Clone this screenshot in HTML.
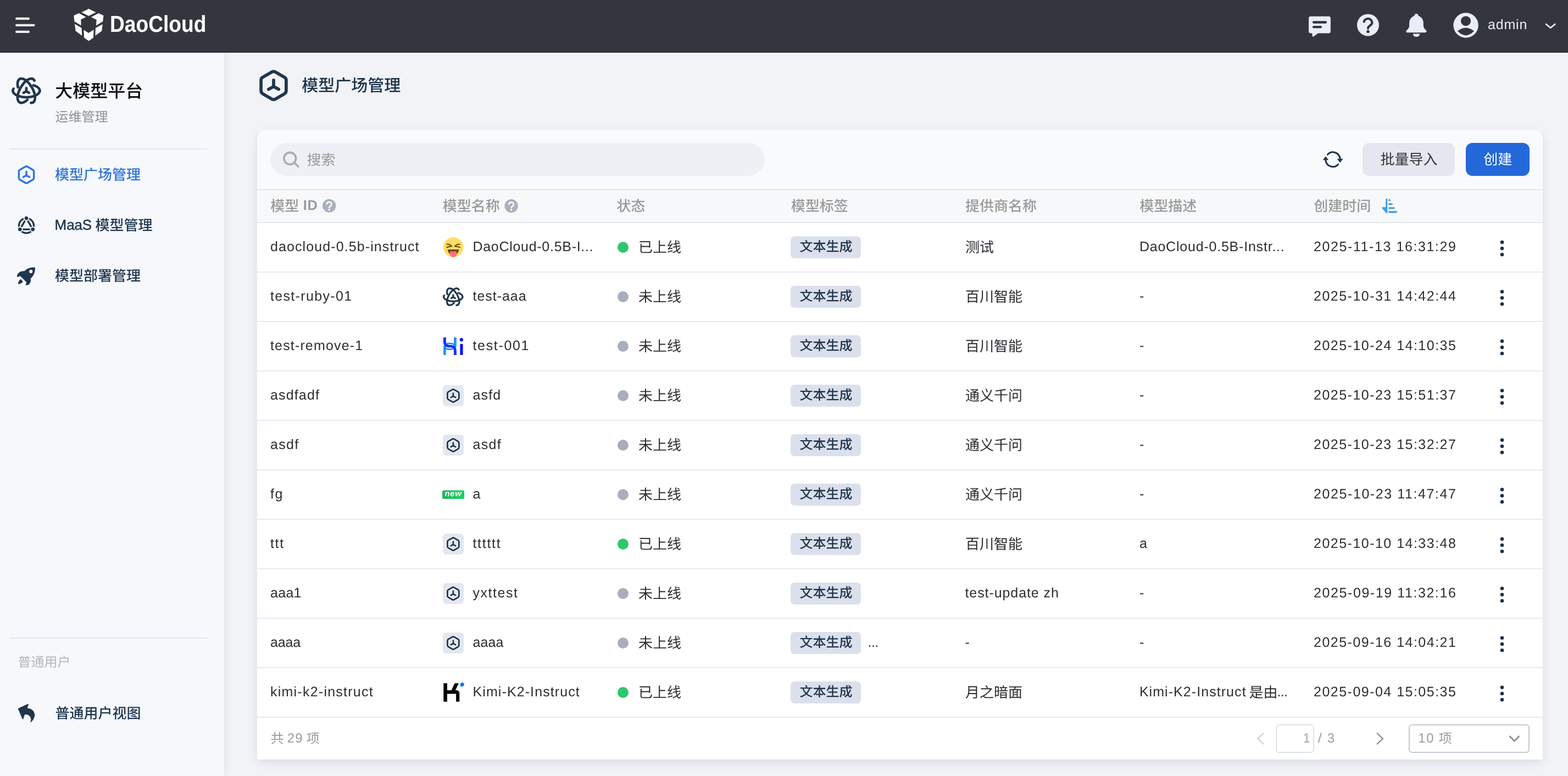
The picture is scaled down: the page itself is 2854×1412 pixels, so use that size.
<!DOCTYPE html>
<html lang="zh-CN">
<head>
<meta charset="utf-8">
<title>模型广场管理 - DaoCloud</title>
<style>
html,body{margin:0;padding:0}
body{width:2854px;height:1412px;overflow:hidden;position:relative;background:#f2f3f7;font-family:"Liberation Sans",sans-serif;color:#2c3036;-webkit-font-smoothing:antialiased;text-rendering:geometricPrecision}
*{box-sizing:border-box}
.abs,.t,.zh,.ic{position:absolute}
.t{white-space:nowrap;display:block}
.zh{display:block;overflow:visible;white-space:nowrap;font-family:"Liberation Sans","Noto Sans CJK SC",sans-serif;font-weight:400}
.zh.m{font-weight:500}
.ic{display:block;overflow:visible}
header{will-change:transform;position:absolute;left:0;top:0;width:2854px;height:96px;background:#33363d;z-index:5}
aside{will-change:transform;position:absolute;left:0;top:96px;width:408px;height:1316px;background:#f7f8fc;box-shadow:3px 0 14px rgba(25,30,45,.075);z-index:4}
main{will-change:transform;position:absolute;left:408px;top:96px;width:2446px;height:1316px}
.hr{position:absolute;left:18px;width:360px;height:2px;background:#e3e6ee}
.card{position:absolute;left:60px;top:140px;width:2340px;height:1146px;background:#fff;border-radius:16px 16px 0 0;box-shadow:0 6px 18px rgba(20,30,60,.10);overflow:hidden}
.toolbar{position:absolute;left:0;top:0;width:2340px;height:108px;background:#f9fafc}
.thead{position:absolute;left:0;top:108px;width:2340px;height:62px;background:#f7f8fa;border-top:2px solid #e4e7ef;border-bottom:2px solid #e4e7ef}
.row{position:absolute;left:0;width:2340px;height:90px;background:#fff;border-bottom:2px solid #e9ebf2}
.search{position:absolute;left:24px;top:24px;width:900px;height:60px;border-radius:30px;background:#eff0f5}
.btn{position:absolute;top:24px;height:60px;border-radius:12px}
.btn.sec{left:2012px;width:168px;background:#e4e7f0}
.btn.pri{left:2200px;width:116px;background:#2468d9}
.tag{position:absolute;width:128px;height:40px;border-radius:7px;background:#dbe0ec}
.dot{position:absolute;width:20px;height:20px;border-radius:50%}
.dot.on{background:#2dc76d}
.dot.off{background:#a8aebb}
.mico{position:absolute;width:38px;height:38px;border-radius:6px;background:#e4e7f0}
.pgin{position:absolute;border-radius:6px;background:#fff}

</style>
</head>
<body>
<svg width="0" height="0" style="position:absolute" aria-hidden="true"><defs>
<symbol id="i-hex" overflow="visible"><path d="M-3.25 -24.57A6.5 6.5 0 0 1 3.25 -24.57L19.66 -15.10A6.5 6.5 0 0 1 22.91 -9.47L22.91 9.47A6.5 6.5 0 0 1 19.66 15.10L3.25 24.57A6.5 6.5 0 0 1 -3.25 24.57L-19.66 15.10A6.5 6.5 0 0 1 -22.91 9.47L-22.91 -9.47A6.5 6.5 0 0 1 -19.66 -15.10Z" fill="none" stroke="currentColor" stroke-width="5.7" stroke-linejoin="round"/><path d="M0 1.9V-9.8M0 1.9L-9.2 6.9M0 1.9L9.3 6.9" fill="none" stroke="currentColor" stroke-width="5.7" stroke-linecap="round"/></symbol>
<symbol id="i-atom" overflow="visible"><g fill="none" stroke="currentColor" stroke-width="4.6" stroke-linecap="round"><path d="M12.98 -10.01A24.5 11.8 0 1 1 -23.30 -3.65"/><path d="M12.98 -10.01A24.5 11.8 0 1 1 -23.30 -3.65" transform="rotate(120)"/><path d="M12.98 -10.01A24.5 11.8 0 1 1 -23.30 -3.65" transform="rotate(240)"/><path d="M0 .9V-4.7M0 .9L-4.9 3.7M0 .9L4.9 3.7"/></g></symbol>
<symbol id="i-kebab" overflow="visible"><circle cx="0" cy="-11.3" r="3.3"/><circle cx="0" cy="0" r="3.3"/><circle cx="0" cy="11.3" r="3.3"/></symbol>
</defs></svg>
<header><svg class="ic" style="left:0;top:0" width="2854" height="96" viewBox="0 0 2854 96" aria-hidden="true">
<g stroke="#e9edf7" stroke-width="4.2" stroke-linecap="round" fill="none">
<path d="M30.1 33.9H52M30.1 45.8H61.6M30.1 57.9H52"/></g>
<g fill="#fff">
<polygon points="161.5,16 174.6,22.5 161.3,29.1 148.4,22.5"/>
<polygon points="134.3,28.2 143.6,24.1 156.4,31.1 147.3,35.6 147.6,46.3 135.4,39"/>
<polygon points="179.4,24.1 188.5,28.2 187.2,39 175,46.5 175.6,36 165.9,31.3"/>
<polygon points="136,43.6 148.6,50.9 149.2,65 137.6,56.3"/>
<polygon points="186.7,43.9 185.3,56.3 173.4,65 173.9,51.1"/>
<polygon points="152.3,54.4 161.3,60.1 170.6,54.1 169.9,68.8 161.5,74.6 153.2,68.8"/>
</g>
<g fill="#e9edf7">
<rect x="2382.1" y="29.8" width="39.8" height="30.8" rx="3.6"/>
<path d="M2388.3 59 L2388.6 65 Q2388.9 67.9 2391.4 66.2 L2400 59.6 Z"/>
<circle cx="2490" cy="45.5" r="20"/>
<path d="M2578 25.1 C2580.2 25.1 2581.6 26.7 2581.6 28.7 C2587 30.5 2590.8 35.5 2590.8 41.5 L2590.8 46 C2590.8 50 2592.5 52.5 2595.5 55 C2597.6 56.8 2596.8 59.2 2594.4 59.2 L2561.6 59.2 C2559.2 59.2 2558.4 56.8 2560.5 55 C2563.5 52.5 2565.2 50 2565.2 46 L2565.2 41.5 C2565.2 35.5 2569 30.5 2574.4 28.7 C2574.4 26.7 2575.8 25.1 2578 25.1 Z"/>
<path d="M2571.8 61.6 L2584.2 61.6 A6.2 5.4 0 0 1 2571.8 61.6 Z"/>
<circle cx="2668.1" cy="46" r="22.7"/>
</g>
<g stroke="#34353b" stroke-width="4.4" stroke-linecap="round" fill="none">
<path d="M2391.1 40.5H2412.9M2391.1 49.1H2403.9"/>
<path d="M2482.6 39.6 A7.5 7.2 0 0 1 2497.4 41.6 C2497.2 46.4 2490 46.6 2490 51.6" stroke-width="4.1"/>
</g>
<g fill="#34353b">
<circle cx="2490" cy="57.4" r="2.75"/>
<circle cx="2668" cy="38.2" r="9"/>
<path d="M2653 56.6 Q2668 44.4 2683 56.6 Q2668 72.2 2653 56.6 Z"/>
</g>
<path d="M2813.9 44 L2822.2 50.6 L2830.4 44" stroke="#e9edf7" stroke-width="2.7" stroke-linecap="round" stroke-linejoin="round" fill="none"/>
</svg><span class="t" style="left:200.00px;top:18.65px;font-size:42px;line-height:50px;font-weight:700;color:#fff;transform:scaleX(0.8845);transform-origin:0 0">DaoCloud</span><span class="t " style="left:2707.97px;top:30.34px;font-size:25px;line-height:30px;color:#e9edf7;letter-spacing:0.84px;">admin</span></header><aside><nav><svg class="ic" style="left:0;top:0" width="408" height="1316" viewBox="0 96 408 1316" aria-hidden="true"><use href="#i-atom" x="47.9" y="165.1" color="#1f364d"/><g transform="translate(48 318) scale(.597)" color="#2f76d9"><use href="#i-hex"/></g><g fill="none" stroke="#1f364d" stroke-width="3.3"><circle cx="48" cy="410.6" r="13.5"/><polygon points="48.00,397.10 59.69,417.35 36.31,417.35"/></g><circle cx="48.00" cy="397.10" r="5.3" fill="#f7f8fc"/><circle cx="48.00" cy="397.10" r="3.4" fill="#1f364d"/><circle cx="59.69" cy="417.35" r="5.3" fill="#f7f8fc"/><circle cx="59.69" cy="417.35" r="3.4" fill="#1f364d"/><circle cx="36.31" cy="417.35" r="5.3" fill="#f7f8fc"/><circle cx="36.31" cy="417.35" r="3.4" fill="#1f364d"/><g transform="translate(18 472) scale(0.04710)" fill="#1f364d"><path fill-rule="evenodd" d="M962 310C840 290 660 340 555 455C440 440 300 500 275 640C272 675 300 690 325 675C370 640 400 640 430 668L618 858C645 885 640 920 615 960C600 990 620 1005 655 1000C780 975 830 860 800 745C920 640 985 470 972 330C970 315 968 311 962 310ZM878 465A66 66 0 1 0 746 465A66 66 0 1 0 878 465Z"/><path d="M420 765L507 852C470 910 400 945 345 950C320 950 315 930 322 900C335 850 370 800 420 765Z"/></g><g transform="translate(18 1268) scale(0.04710)" fill="#1f364d"><path d="M318 465C312 455 318 445 330 438L690 275C712 265 725 280 718 300L672 435C860 445 960 570 957 710C955 830 880 930 780 1000C830 900 830 790 740 720C690 690 640 680 578 680L515 855C508 872 490 872 482 855Z"/></g></svg><span class="zh m" style="left:100.2px;top:53.7px;font-size:32px;line-height:32px;color:#0b0d10;">大模型平台</span><span class="zh" style="left:100.4px;top:106.1px;font-size:24px;line-height:24px;color:#8b919b;">运维管理</span><div class="hr" style="top:174px"></div><span class="zh m" style="left:100px;top:208.6px;font-size:26px;line-height:26px;color:#2f76d9;">模型广场管理</span><span class="t " style="left:99.58px;top:297.69px;font-size:26px;line-height:31px;color:#1f364d;letter-spacing:-0.11px;-webkit-text-stroke:0.5px #1f364d;">MaaS</span><span class="zh m" style="left:173.6px;top:301.4px;font-size:26px;line-height:26px;color:#1f364d;">模型管理</span><span class="zh m" style="left:100px;top:393.2px;font-size:26px;line-height:26px;color:#1f364d;">模型部署管理</span><div class="hr" style="top:1064px"></div><span class="zh" style="left:32.4px;top:1098.4px;font-size:24px;line-height:24px;color:#b3b8c1;">普通用户</span><span class="zh m" style="left:100.4px;top:1188.7px;font-size:26px;line-height:26px;color:#1f364d;">普通用户视图</span></nav></aside><main><svg class="ic" style="left:0;top:0" width="400" height="120" viewBox="408 96 400 120" aria-hidden="true"><use href="#i-hex" x="498" y="155.6" color="#1f364d"/></svg><h1 style="margin:0"><span class="zh m" style="left:141.2px;top:45.6px;font-size:30px;line-height:30px;color:#1c3349;">模型广场管理</span></h1><section class="card"><div class="toolbar"><div class="search"></div><svg class="ic" style="left:0;top:0" width="2340" height="108" viewBox="468 236 2340 108" aria-hidden="true"><g fill="none" stroke="#a7afbc" stroke-width="3.8" stroke-linecap="round"><circle cx="527.7" cy="288.3" r="10.8"/><path d="M535.6 296.1L542.7 303"/></g><g transform="translate(2396 260) scale(0.04710)"><g fill="none" stroke="#1f364d" stroke-width="66" stroke-linecap="round"><path d="M432 450A280 280 0 0 1 916 600"/><path d="M842 830A280 280 0 0 1 358 680"/></g><g fill="#1f364d" stroke="#1f364d" stroke-width="24" stroke-linejoin="round"><path d="M822 622H1008L915 748Z"/><path d="M452 653H266L358 537Z"/></g></g></svg><span class="zh" style="left:90.6px;top:41.7px;font-size:26px;line-height:26px;color:#9a9a9a;">搜索</span><div class="btn sec"></div><div class="btn pri"></div><span class="zh" style="left:2044.6px;top:40.9px;font-size:26px;line-height:26px;color:#333333;">批量导入</span><span class="zh" style="left:2232.2px;top:40.9px;font-size:26px;line-height:26px;color:#ffffff;">创建</span></div><div class="thead"></div><span class="zh m" style="left:24.2px;top:125.8px;font-size:26px;line-height:26px;color:#999999;">模型</span><span class="t " style="left:83.85px;top:122.56px;font-size:25.5px;line-height:31px;color:#999999;letter-spacing:0.69px;font-weight:700;">ID</span><span class="zh m" style="left:337.7px;top:125.8px;font-size:26px;line-height:26px;color:#999999;">模型名称</span><span class="zh m" style="left:654.4px;top:125.8px;font-size:26px;line-height:26px;color:#999999;">状态</span><span class="zh m" style="left:971.7px;top:125.8px;font-size:26px;line-height:26px;color:#999999;">模型标签</span><span class="zh m" style="left:1288.9px;top:125.8px;font-size:26px;line-height:26px;color:#999999;">提供商名称</span><span class="zh m" style="left:1606.2px;top:125.8px;font-size:26px;line-height:26px;color:#999999;">模型描述</span><span class="zh m" style="left:1923.2px;top:125.8px;font-size:26px;line-height:26px;color:#999999;">创建时间</span><svg class="ic" style="left:0;top:108px" width="2340" height="62" viewBox="468 344 2340 62" aria-hidden="true"><g><circle cx="599.2" cy="374.4" r="12.2" fill="#a9b1bd"/><path d="M594.9000000000001 371.0A4.4 4.2 0 0 1 603.6 371.79999999999995C603.5 375.0 599.2 374.79999999999995 599.2 377.79999999999995" fill="none" stroke="#fff" stroke-width="2.7" stroke-linecap="round"/><circle cx="599.2" cy="381.7" r="1.75" fill="#fff"/></g><g><circle cx="930.6" cy="374.8" r="12.2" fill="#a9b1bd"/><path d="M926.3000000000001 371.40000000000003A4.4 4.2 0 0 1 935.0 372.2C934.9 375.40000000000003 930.6 375.2 930.6 378.2" fill="none" stroke="#fff" stroke-width="2.7" stroke-linecap="round"/><circle cx="930.6" cy="382.1" r="1.75" fill="#fff"/></g><g transform="translate(2500 345) scale(0.04710)" fill="#409fe4"><path d="M470 385C470 355 490 340 535 340V925C520 925 505 918 495 905L325 715C310 695 320 680 345 680H470Z"/><rect x="575" y="373" width="86" height="70" rx="35"/><rect x="575" y="525" width="166" height="70" rx="35"/><rect x="575" y="677" width="251" height="70" rx="35"/><rect x="575" y="830" width="336" height="70" rx="35"/></g></svg><div class="row" style="top:170px"><span class="t " style="left:23.98px;top:28.24px;font-size:25px;line-height:30px;color:#2b2d31;letter-spacing:1.10px;">daocloud-0.5b-instruct</span><svg class="ic" style="left:0;top:0" width="2340" height="88" viewBox="468 406 2340 88" aria-hidden="true"><g transform="translate(796 420) scale(0.04710)"><circle cx="618" cy="635" r="384" fill="#ffdc64"/><g fill="none" stroke="#664500" stroke-width="42" stroke-linecap="round" stroke-linejoin="round"><path d="M375 522C450 515 520 545 560 602C490 600 420 615 365 640"/><path d="M861 522C786 515 716 545 676 602C746 600 816 615 871 640"/></g><path d="M400 722H832C820 850 740 930 616 930C492 930 412 850 400 722Z" fill="#664500"/><path d="M490 790H742V895A126 126 0 0 1 490 895Z" fill="#ff7083"/><rect x="603" y="790" width="26" height="120" fill="#e8596e"/></g><use href="#i-kebab" x="2734" y="452" fill="#1d3349"/></svg><span class="t " style="left:392.48px;top:28.24px;font-size:25px;line-height:30px;color:#2b2d31;letter-spacing:0.71px;">DaoCloud-0.5B-I...</span><span class="dot on" style="left:656px;top:33.60000000000002px"></span><span class="zh" style="left:693.9px;top:30.9px;font-size:26px;line-height:26px;color:#2b2d31;">已上线</span><span class="tag" style="left:971px;top:23.69999999999999px"></span><span class="zh m" style="left:987.4px;top:32.3px;font-size:24px;line-height:24px;color:#1d3349;">文本生成</span><span class="zh" style="left:1288.9px;top:30.9px;font-size:26px;line-height:26px;color:#2b2d31;">测试</span><span class="t " style="left:1605.88px;top:28.24px;font-size:25px;line-height:30px;color:#2b2d31;letter-spacing:0.79px;">DaoCloud-0.5B-Instr...</span><span class="t " style="left:1923.07px;top:28.24px;font-size:25px;line-height:30px;color:#2b2d31;letter-spacing:1.58px;">2025-11-13 16:31:29</span></div><div class="row" style="top:260px"><span class="t " style="left:23.98px;top:28.24px;font-size:25px;line-height:30px;color:#2b2d31;letter-spacing:1.34px;">test-ruby-01</span><svg class="ic" style="left:0;top:0" width="2340" height="88" viewBox="468 496 2340 88" aria-hidden="true"><g transform="translate(824.8 540) scale(.70)" color="#1f364d"><use href="#i-atom"/></g><use href="#i-kebab" x="2734" y="542" fill="#1d3349"/></svg><span class="t " style="left:392.48px;top:28.24px;font-size:25px;line-height:30px;color:#2b2d31;letter-spacing:0.98px;">test-aaa</span><span class="dot off" style="left:656px;top:33.60000000000002px"></span><span class="zh" style="left:693.9px;top:30.9px;font-size:26px;line-height:26px;color:#2b2d31;">未上线</span><span class="tag" style="left:971px;top:23.700000000000045px"></span><span class="zh m" style="left:987.4px;top:32.3px;font-size:24px;line-height:24px;color:#1d3349;">文本生成</span><span class="zh" style="left:1288.9px;top:30.9px;font-size:26px;line-height:26px;color:#2b2d31;">百川智能</span><span class="t " style="left:1605.88px;top:28.24px;font-size:25px;line-height:30px;color:#2b2d31;">-</span><span class="t " style="left:1923.07px;top:28.24px;font-size:25px;line-height:30px;color:#2b2d31;letter-spacing:1.48px;">2025-10-31 14:42:44</span></div><div class="row" style="top:350px"><span class="t " style="left:23.98px;top:28.24px;font-size:25px;line-height:30px;color:#2b2d31;letter-spacing:1.16px;">test-remove-1</span><svg class="ic" style="left:0;top:0" width="2340" height="88" viewBox="468 586 2340 88" aria-hidden="true"><g transform="translate(796 600) scale(0.04710)"><rect x="235" y="612" width="100" height="363" fill="#2491ff"/><rect x="637" y="295" width="103" height="372" fill="#2491ff"/><g fill="none" stroke="#1d82ff"><path d="M300 715C400 762 520 765 612 738" stroke-width="58"/><path d="M352 548C430 512 570 515 664 585" stroke-width="52"/></g><path d="M285 295V470C285 590 360 634 487 634C615 634 688 680 688 800V975" fill="none" stroke="#1034ff" stroke-width="104"/><circle cx="932" cy="385" r="66" fill="#0a14ff"/><rect x="878" y="550" width="112" height="425" fill="#0a14ff"/></g><use href="#i-kebab" x="2734" y="632" fill="#1d3349"/></svg><span class="t " style="left:392.48px;top:28.24px;font-size:25px;line-height:30px;color:#2b2d31;letter-spacing:1.66px;">test-001</span><span class="dot off" style="left:656px;top:33.60000000000002px"></span><span class="zh" style="left:693.9px;top:30.9px;font-size:26px;line-height:26px;color:#2b2d31;">未上线</span><span class="tag" style="left:971px;top:23.700000000000045px"></span><span class="zh m" style="left:987.4px;top:32.3px;font-size:24px;line-height:24px;color:#1d3349;">文本生成</span><span class="zh" style="left:1288.9px;top:30.9px;font-size:26px;line-height:26px;color:#2b2d31;">百川智能</span><span class="t " style="left:1605.88px;top:28.24px;font-size:25px;line-height:30px;color:#2b2d31;">-</span><span class="t " style="left:1923.07px;top:28.24px;font-size:25px;line-height:30px;color:#2b2d31;letter-spacing:1.48px;">2025-10-24 14:10:35</span></div><div class="row" style="top:440px"><span class="t " style="left:23.98px;top:28.24px;font-size:25px;line-height:30px;color:#2b2d31;letter-spacing:1.16px;">asdfadf</span><div class="mico" style="left:338px;top:25px"></div><svg class="ic" style="left:0;top:0" width="2340" height="88" viewBox="468 676 2340 88" aria-hidden="true"><g transform="translate(824.9 720) scale(.457)" color="#16304a"><use href="#i-hex"/></g><use href="#i-kebab" x="2734" y="722" fill="#1d3349"/></svg><span class="t " style="left:392.48px;top:28.24px;font-size:25px;line-height:30px;color:#2b2d31;letter-spacing:1.13px;">asfd</span><span class="dot off" style="left:656px;top:33.60000000000002px"></span><span class="zh" style="left:693.9px;top:30.9px;font-size:26px;line-height:26px;color:#2b2d31;">未上线</span><span class="tag" style="left:971px;top:23.700000000000045px"></span><span class="zh m" style="left:987.4px;top:32.3px;font-size:24px;line-height:24px;color:#1d3349;">文本生成</span><span class="zh" style="left:1288.9px;top:30.9px;font-size:26px;line-height:26px;color:#2b2d31;">通义千问</span><span class="t " style="left:1605.88px;top:28.24px;font-size:25px;line-height:30px;color:#2b2d31;">-</span><span class="t " style="left:1923.07px;top:28.24px;font-size:25px;line-height:30px;color:#2b2d31;letter-spacing:1.48px;">2025-10-23 15:51:37</span></div><div class="row" style="top:530px"><span class="t " style="left:23.98px;top:28.24px;font-size:25px;line-height:30px;color:#2b2d31;letter-spacing:1.30px;">asdf</span><div class="mico" style="left:338px;top:25px"></div><svg class="ic" style="left:0;top:0" width="2340" height="88" viewBox="468 766 2340 88" aria-hidden="true"><g transform="translate(824.9 810) scale(.457)" color="#16304a"><use href="#i-hex"/></g><use href="#i-kebab" x="2734" y="812" fill="#1d3349"/></svg><span class="t " style="left:392.48px;top:28.24px;font-size:25px;line-height:30px;color:#2b2d31;letter-spacing:1.30px;">asdf</span><span class="dot off" style="left:656px;top:33.60000000000002px"></span><span class="zh" style="left:693.9px;top:30.9px;font-size:26px;line-height:26px;color:#2b2d31;">未上线</span><span class="tag" style="left:971px;top:23.700000000000045px"></span><span class="zh m" style="left:987.4px;top:32.3px;font-size:24px;line-height:24px;color:#1d3349;">文本生成</span><span class="zh" style="left:1288.9px;top:30.9px;font-size:26px;line-height:26px;color:#2b2d31;">通义千问</span><span class="t " style="left:1605.88px;top:28.24px;font-size:25px;line-height:30px;color:#2b2d31;">-</span><span class="t " style="left:1923.07px;top:28.24px;font-size:25px;line-height:30px;color:#2b2d31;letter-spacing:1.48px;">2025-10-23 15:32:27</span></div><div class="row" style="top:620px"><span class="t " style="left:23.98px;top:28.24px;font-size:25px;line-height:30px;color:#2b2d31;letter-spacing:1.70px;">fg</span><svg class="ic" style="left:0;top:0" width="2340" height="88" viewBox="468 856 2340 88" aria-hidden="true"><defs><linearGradient id="gnew" x1="0" x2="1" y1="0" y2="0"><stop offset="0" stop-color="#22b35c"/><stop offset="1" stop-color="#0fd65c"/></linearGradient></defs><rect x="805" y="892.2" width="40" height="15.6" rx="2.6" fill="url(#gnew)"/><use href="#i-kebab" x="2734" y="902" fill="#1d3349"/></svg><span class="t " style="left:341.53px;top:34.10px;font-size:15px;line-height:18px;color:#fff;letter-spacing:0.59px;font-weight:700;font-style:italic;">new</span><span class="t " style="left:392.48px;top:28.24px;font-size:25px;line-height:30px;color:#2b2d31;">a</span><span class="dot off" style="left:656px;top:33.60000000000002px"></span><span class="zh" style="left:693.9px;top:30.9px;font-size:26px;line-height:26px;color:#2b2d31;">未上线</span><span class="tag" style="left:971px;top:23.700000000000045px"></span><span class="zh m" style="left:987.4px;top:32.3px;font-size:24px;line-height:24px;color:#1d3349;">文本生成</span><span class="zh" style="left:1288.9px;top:30.9px;font-size:26px;line-height:26px;color:#2b2d31;">通义千问</span><span class="t " style="left:1605.88px;top:28.24px;font-size:25px;line-height:30px;color:#2b2d31;">-</span><span class="t " style="left:1923.07px;top:28.24px;font-size:25px;line-height:30px;color:#2b2d31;letter-spacing:1.58px;">2025-10-23 11:47:47</span></div><div class="row" style="top:710px"><span class="t " style="left:23.98px;top:28.24px;font-size:25px;line-height:30px;color:#2b2d31;letter-spacing:1.70px;">ttt</span><div class="mico" style="left:338px;top:25px"></div><svg class="ic" style="left:0;top:0" width="2340" height="88" viewBox="468 946 2340 88" aria-hidden="true"><g transform="translate(824.9 990) scale(.457)" color="#16304a"><use href="#i-hex"/></g><use href="#i-kebab" x="2734" y="992" fill="#1d3349"/></svg><span class="t " style="left:392.48px;top:28.24px;font-size:25px;line-height:30px;color:#2b2d31;letter-spacing:1.70px;">tttttt</span><span class="dot on" style="left:656px;top:33.60000000000002px"></span><span class="zh" style="left:693.9px;top:30.9px;font-size:26px;line-height:26px;color:#2b2d31;">已上线</span><span class="tag" style="left:971px;top:23.700000000000045px"></span><span class="zh m" style="left:987.4px;top:32.3px;font-size:24px;line-height:24px;color:#1d3349;">文本生成</span><span class="zh" style="left:1288.9px;top:30.9px;font-size:26px;line-height:26px;color:#2b2d31;">百川智能</span><span class="t " style="left:1605.88px;top:28.24px;font-size:25px;line-height:30px;color:#2b2d31;">a</span><span class="t " style="left:1923.07px;top:28.24px;font-size:25px;line-height:30px;color:#2b2d31;letter-spacing:1.48px;">2025-10-10 14:33:48</span></div><div class="row" style="top:800px"><span class="t " style="left:23.98px;top:28.24px;font-size:25px;line-height:30px;color:#2b2d31;letter-spacing:0.31px;">aaa1</span><div class="mico" style="left:338px;top:25px"></div><svg class="ic" style="left:0;top:0" width="2340" height="88" viewBox="468 1036 2340 88" aria-hidden="true"><g transform="translate(824.9 1080) scale(.457)" color="#16304a"><use href="#i-hex"/></g><use href="#i-kebab" x="2734" y="1082" fill="#1d3349"/></svg><span class="t " style="left:392.48px;top:28.24px;font-size:25px;line-height:30px;color:#2b2d31;letter-spacing:1.55px;">yxttest</span><span class="dot off" style="left:656px;top:33.59999999999991px"></span><span class="zh" style="left:693.9px;top:30.9px;font-size:26px;line-height:26px;color:#2b2d31;">未上线</span><span class="tag" style="left:971px;top:23.700000000000045px"></span><span class="zh m" style="left:987.4px;top:32.3px;font-size:24px;line-height:24px;color:#1d3349;">文本生成</span><span class="t " style="left:1288.47px;top:28.24px;font-size:25px;line-height:30px;color:#2b2d31;letter-spacing:0.92px;">test-update zh</span><span class="t " style="left:1605.88px;top:28.24px;font-size:25px;line-height:30px;color:#2b2d31;">-</span><span class="t " style="left:1923.07px;top:28.24px;font-size:25px;line-height:30px;color:#2b2d31;letter-spacing:1.58px;">2025-09-19 11:32:16</span></div><div class="row" style="top:890px"><span class="t " style="left:23.98px;top:28.24px;font-size:25px;line-height:30px;color:#2b2d31;letter-spacing:-0.15px;">aaaa</span><div class="mico" style="left:338px;top:25px"></div><svg class="ic" style="left:0;top:0" width="2340" height="88" viewBox="468 1126 2340 88" aria-hidden="true"><g transform="translate(824.9 1170) scale(.457)" color="#16304a"><use href="#i-hex"/></g><use href="#i-kebab" x="2734" y="1172" fill="#1d3349"/></svg><span class="t " style="left:392.48px;top:28.24px;font-size:25px;line-height:30px;color:#2b2d31;letter-spacing:0.08px;">aaaa</span><span class="dot off" style="left:656px;top:33.59999999999991px"></span><span class="zh" style="left:693.9px;top:30.9px;font-size:26px;line-height:26px;color:#2b2d31;">未上线</span><span class="tag" style="left:971px;top:23.700000000000045px"></span><span class="zh m" style="left:987.4px;top:32.3px;font-size:24px;line-height:24px;color:#1d3349;">文本生成</span><span class="t " style="left:1111.58px;top:28.24px;font-size:25px;line-height:30px;color:#2b2d31;letter-spacing:-0.60px;">...</span><span class="t " style="left:1288.47px;top:28.24px;font-size:25px;line-height:30px;color:#2b2d31;">-</span><span class="t " style="left:1605.88px;top:28.24px;font-size:25px;line-height:30px;color:#2b2d31;">-</span><span class="t " style="left:1923.07px;top:28.24px;font-size:25px;line-height:30px;color:#2b2d31;letter-spacing:1.48px;">2025-09-16 14:04:21</span></div><div class="row" style="top:980px"><span class="t " style="left:23.98px;top:28.24px;font-size:25px;line-height:30px;color:#2b2d31;letter-spacing:1.24px;">kimi-k2-instruct</span><svg class="ic" style="left:0;top:0" width="2340" height="88" viewBox="468 1216 2340 88" aria-hidden="true"><g transform="translate(796 1230) scale(0.04710)" fill="#000"><rect x="240" y="280" width="140" height="715"/><path d="M672 280H826L690 566H536Z"/><path d="M380 552H745C815 560 855 605 855 660V995H725V690C700 690 690 690 640 690H380Z"/><circle cx="962" cy="330" r="76" fill="#0a78ff"/><path d="M895 360L890 420L950 400Z" fill="#0a78ff"/></g><use href="#i-kebab" x="2734" y="1262" fill="#1d3349"/></svg><span class="t " style="left:392.48px;top:28.24px;font-size:25px;line-height:30px;color:#2b2d31;letter-spacing:1.10px;">Kimi-K2-Instruct</span><span class="dot on" style="left:656px;top:33.59999999999991px"></span><span class="zh" style="left:693.9px;top:30.9px;font-size:26px;line-height:26px;color:#2b2d31;">已上线</span><span class="tag" style="left:971px;top:23.700000000000045px"></span><span class="zh m" style="left:987.4px;top:32.3px;font-size:24px;line-height:24px;color:#1d3349;">文本生成</span><span class="zh" style="left:1288.9px;top:30.9px;font-size:26px;line-height:26px;color:#2b2d31;">月之暗面</span><span class="t " style="left:1605.88px;top:28.24px;font-size:25px;line-height:30px;color:#2b2d31;letter-spacing:1.06px;">Kimi-K2-Instruct</span><span class="zh" style="left:1805.4px;top:30.9px;font-size:26px;line-height:26px;color:#2b2d31;">是由</span><span class="t " style="left:1856.38px;top:28.24px;font-size:25px;line-height:30px;color:#2b2d31;letter-spacing:-0.60px;">...</span><span class="t " style="left:1923.07px;top:28.24px;font-size:25px;line-height:30px;color:#2b2d31;letter-spacing:1.48px;">2025-09-04 15:05:35</span></div><footer><span class="zh" style="left:24.4px;top:1096.8px;font-size:24px;line-height:24px;color:#9b9b9b;">共</span><span class="t " style="left:54.72px;top:1093.28px;font-size:24px;line-height:29px;color:#9b9b9b;letter-spacing:1.17px;">29</span><span class="zh" style="left:89.8px;top:1096.8px;font-size:24px;line-height:24px;color:#9b9b9b;">项</span><div class="pgin" style="left:1854px;top:1082px;width:70px;height:52px;border:2px solid #dfe2ea"></div><div class="pgin" style="left:2096px;top:1082px;width:220px;height:52px;border:2px solid #c3c9d6"></div><svg class="ic" style="left:0;top:1070px" width="2340" height="76" viewBox="468 1306 2340 76" aria-hidden="true"><g fill="none" stroke-width="2.6" stroke-linecap="round" stroke-linejoin="round"><path d="M2299.4 1334.4L2289.2 1344L2299.4 1353.6" stroke="#d3d6dc"/><path d="M2506.8 1334.4L2517 1344L2506.8 1353.6" stroke="#999"/><path d="M2748.2 1340L2756.4 1348.3L2764.6 1340" stroke="#888"/></g></svg><span class="t " style="left:1903.52px;top:1093.28px;font-size:24px;line-height:29px;color:#a6a6a6;">1</span><span class="t " style="left:1930.92px;top:1093.28px;font-size:24px;line-height:29px;color:#9b9b9b;letter-spacing:1.70px;">/ 3</span><span class="t " style="left:2113.22px;top:1093.28px;font-size:24px;line-height:29px;color:#9b9b9b;letter-spacing:1.70px;">10</span><span class="zh" style="left:2150.6px;top:1096.8px;font-size:24px;line-height:24px;color:#9b9b9b;">项</span></footer></section></main>
</body>
</html>
